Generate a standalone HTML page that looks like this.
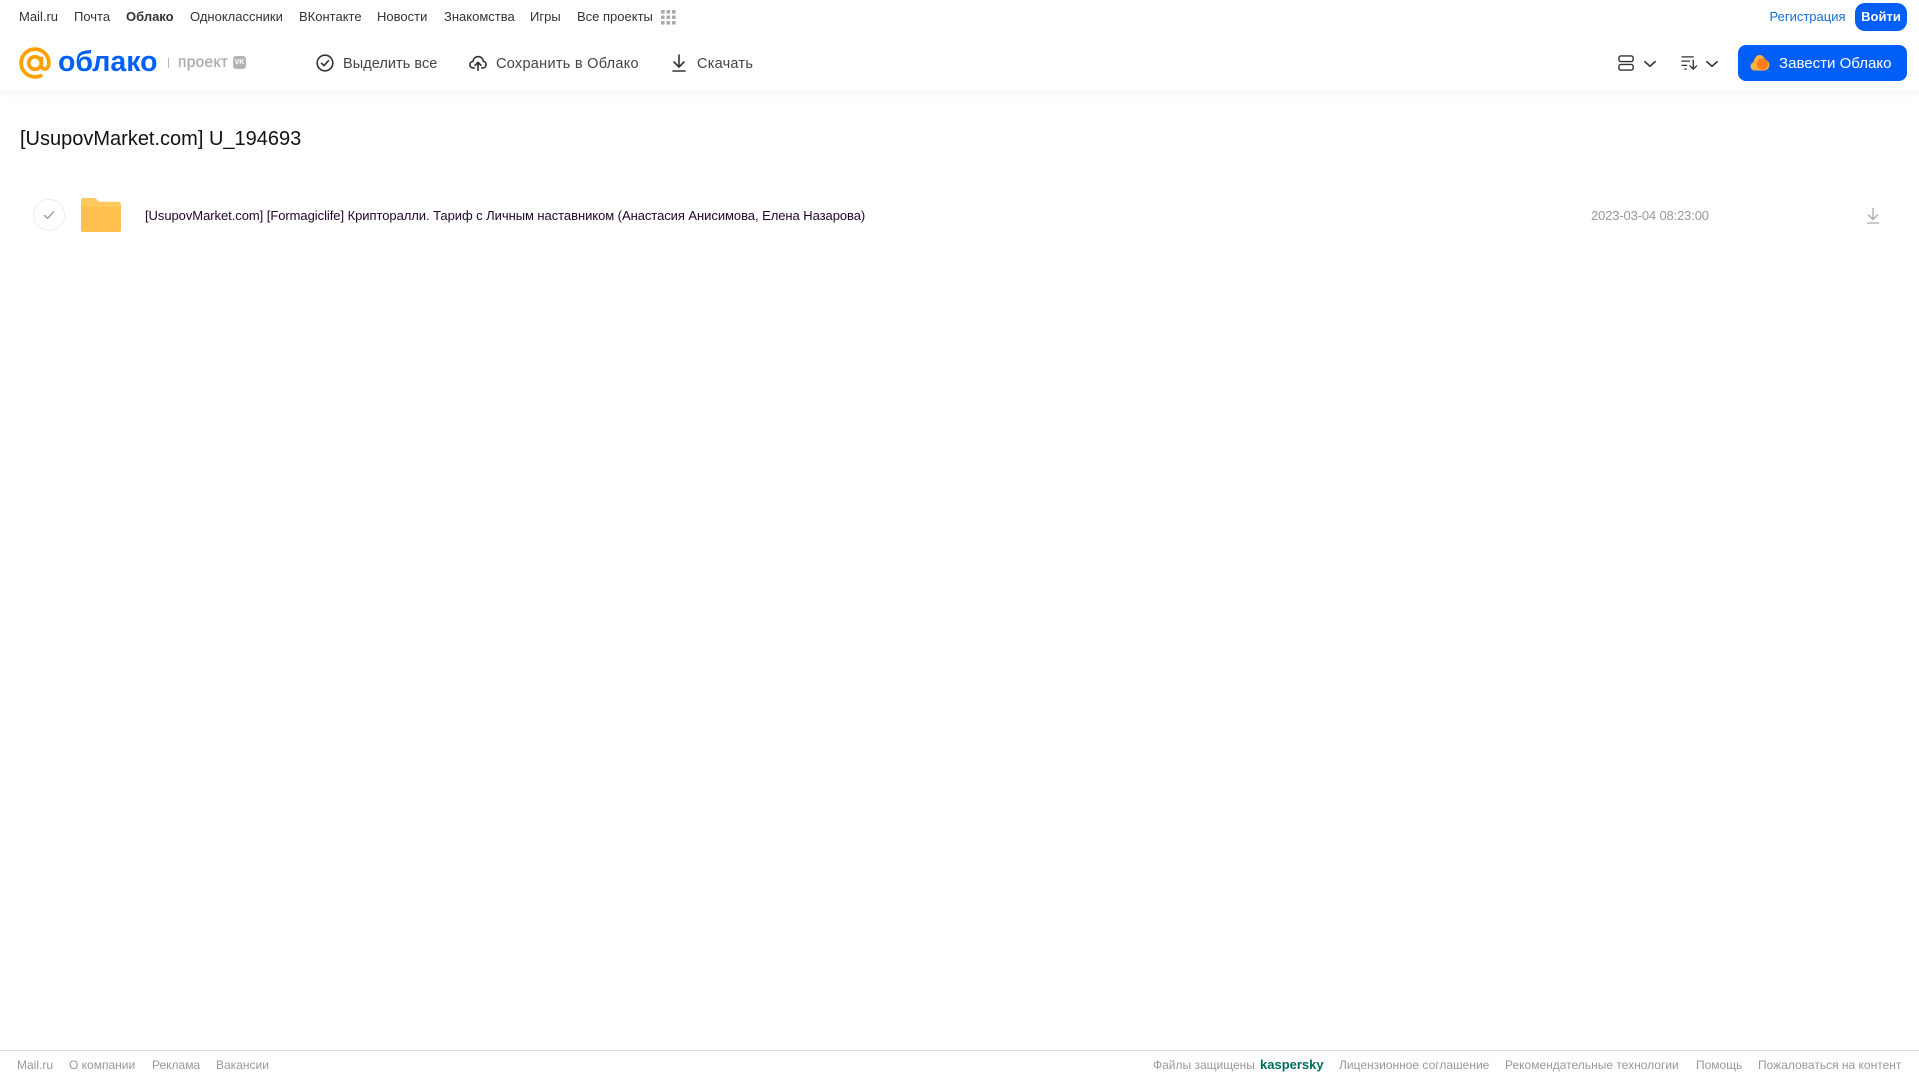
<!DOCTYPE html>
<html lang="ru"><head><meta charset="utf-8"><title>Облако</title>
<style>
html,body{margin:0;padding:0;width:1919px;height:1079px;overflow:hidden;background:#fff;font-family:"Liberation Sans",Arial,sans-serif}
.t{position:absolute;white-space:nowrap;line-height:18px;height:18px}
.n{font-size:13px;color:#333;top:8px}
.b{font-size:14.5px;color:#444;top:55px}
.f{font-size:12px;color:#999;top:1056px}
svg{position:absolute;overflow:visible}
#hd{position:absolute;left:0;top:0;width:1919px;height:91px;background:#fff;box-shadow:0 2px 8px rgba(0,0,0,.06)}
</style></head><body>
<div id="hd"></div>
<span class="t n" style="left:19px">Mail.ru</span>
<span class="t n" style="left:74px">Почта</span>
<span class="t n" style="left:126px;font-weight:bold">Облако</span>
<span class="t n" style="left:190px">Одноклассники</span>
<span class="t n" style="left:299px">ВКонтакте</span>
<span class="t n" style="left:377px">Новости</span>
<span class="t n" style="left:444px">Знакомства</span>
<span class="t n" style="left:530px">Игры</span>
<span class="t n" style="left:577px">Все проекты</span>
<svg style="left:661px;top:10px" width="15" height="15" fill="#a8a8a8"><rect x="0" y="0" width="3.6" height="3.6" rx=".8"/><rect x="5.5" y="0" width="3.6" height="3.6" rx=".8"/><rect x="11" y="0" width="3.6" height="3.6" rx=".8"/><rect x="0" y="5.5" width="3.6" height="3.6" rx=".8"/><rect x="5.5" y="5.5" width="3.6" height="3.6" rx=".8"/><rect x="11" y="5.5" width="3.6" height="3.6" rx=".8"/><rect x="0" y="11" width="3.6" height="3.6" rx=".8"/><rect x="5.5" y="11" width="3.6" height="3.6" rx=".8"/><rect x="11" y="11" width="3.6" height="3.6" rx=".8"/></svg>

<span class="t n" style="left:1769.500px;color:#1a6fd4">Регистрация</span>
<div style="position:absolute;left:1855px;top:3px;width:52px;height:28px;border-radius:10px;background:#005ff9;color:#fff;font-size:13px;font-weight:bold;line-height:28px;text-align:center">Войти</div>

<svg style="left:19px;top:47px" width="32" height="32" viewBox="0 0 33 33" fill="none" stroke="#ffa000" stroke-width="3.800"><circle cx="16.5" cy="16.5" r="6.5"/><path d="M23 10v8.500c0 2.600 1.500 4.200 3.600 4.200 2.600 0 4.200-2.800 4.200-6.200C30.800 8.600 24.400 2.200 16.500 2.200S2.200 8.600 2.200 16.500 8.600 30.800 16.500 30.800c2.700 0 5.200-.7 7.300-2"/></svg>
<span class="t" style="left:58px;top:44px;height:36px;line-height:36px;font-size:28.500px;font-weight:bold;color:#005ff9">облако</span>
<div style="position:absolute;left:168px;top:58px;width:1px;height:10px;background:#bbb"></div>
<span class="t" style="left:178px;top:54px;font-size:15.500px;color:#aaa;letter-spacing:.3px;-webkit-text-stroke:.3px #aaa">проект</span>
<div style="position:absolute;left:233px;top:56px;width:13px;height:13px;border-radius:3px;background:#b4b4b4;color:#fff;font-size:7px;font-weight:bold;line-height:13px;text-align:center">VK</div>

<svg style="left:315px;top:54px" width="20" height="18" viewBox="0 0 20 18" fill="none" stroke="#333" stroke-width="1.600"><circle cx="10" cy="9" r="7.800"/><path d="M6.500 9.200l2.500 2.500 4.500-5" stroke-linecap="round" stroke-linejoin="round"/></svg>
<span class="t b" style="left:343px;letter-spacing:.05px">Выделить все</span>
<svg style="left:469px;top:54px" width="18" height="18" viewBox="0 0 20 18" fill="none" stroke="#333" stroke-width="1.800" stroke-linecap="round" stroke-linejoin="round"><path d="M5.800 14.500H5c-2.500 0-4-1.600-4-3.700 0-2 1.500-3.500 3.400-3.600C5 4 7.300 1.800 10.200 1.800c3 0 5.300 2.200 5.700 5.300 1.800.2 3.100 1.700 3.100 3.700 0 2.100-1.500 3.700-3.700 3.700h-1.100"/><path d="M10 17V8.500M6.800 11.500L10 8.300l3.200 3.200"/></svg>
<span class="t b" style="left:496px;letter-spacing:.28px">Сохранить в Облако</span>
<svg style="left:671px;top:54px" width="16" height="18" viewBox="0 0 16 18" fill="none" stroke="#333" stroke-width="1.600" stroke-linecap="round" stroke-linejoin="round"><path d="M8 1v11.500M3 8l5 5 5-5M2 17h12"/></svg>
<span class="t b" style="left:697px;letter-spacing:.25px">Скачать</span>

<svg style="left:1618px;top:54px" width="17" height="18" viewBox="0 0 18 18" fill="none" stroke="#333" stroke-width="1.500"><rect x="1" y="1.500" width="15" height="6" rx="2"/><rect x="1" y="10.500" width="15" height="6" rx="2"/></svg>
<svg style="left:1644px;top:60px" width="12" height="8" viewBox="0 0 13 8" fill="none" stroke="#333" stroke-width="1.800" stroke-linecap="round" stroke-linejoin="round"><path d="M1 1.500l5.500 5 5.500-5"/></svg>
<svg style="left:1681px;top:55px" width="17" height="16" viewBox="0 0 18 16" fill="none" stroke="#333" stroke-width="1.400" stroke-linecap="round" stroke-linejoin="round"><path d="M1 1.500h12M1 6h8M1 10.500h5M4 14.500h1.500M13 5v9.500M9.500 11l3.500 3.500 3.500-3.500"/></svg>
<svg style="left:1706px;top:60px" width="12" height="8" viewBox="0 0 13 8" fill="none" stroke="#333" stroke-width="1.800" stroke-linecap="round" stroke-linejoin="round"><path d="M1 1.500l5.500 5 5.500-5"/></svg>

<div style="position:absolute;left:1738px;top:45px;width:169px;height:36px;border-radius:8px;background:#005ff9"></div>
<svg style="left:1750px;top:54px" width="20" height="17" viewBox="0 0 20 17"><path d="M5 16.500C2 16.500.5 14.500.5 12.300c0-2 1.200-3.500 3-4C4.200 4.500 6.500 1 9.500 1c2.800 0 4.800 2 5.500 4.700 2.500.4 4.300 2.500 4.300 5.300 0 3-2.300 5.500-5.300 5.500z" fill="#ffb13d"/><circle cx="12.500" cy="10" r="5.500" fill="#ff7a1a"/></svg>
<span class="t" style="left:1779px;top:55px;font-size:15px;color:#fff;letter-spacing:.02px">Завести Облако</span>

<span class="t" style="left:20px;top:126px;height:26px;line-height:26px;font-size:20px;color:#111">[UsupovMarket.com] U_194693</span>

<div style="position:absolute;left:33px;top:199px;width:30px;height:30px;border:1px solid #eee;border-radius:50%"></div>
<svg style="left:43px;top:210px" width="12" height="10" viewBox="0 0 12 10" fill="none" stroke="#999" stroke-width="1.400" stroke-linecap="round" stroke-linejoin="round"><path d="M1.500 5.500l3 2.800 6-6.500"/></svg>
<svg style="left:81px;top:198px" width="40" height="34" viewBox="0 0 40 34"><path d="M2.500 0h10c2 0 3 1 4 2.500.6.800 1.200 1.200 2.500 1.200h18.500c1.400 0 2.500 1.100 2.500 2.500V32c0 1.100-.9 2-2 2H2c-1.100 0-2-.9-2-2V2.500C0 1.100 1.100 0 2.500 0z" fill="#ffca62"/><path d="M0 8.500h40V32c0 1.100-.9 2-2 2H2c-1.100 0-2-.9-2-2z" fill="#ffc04f"/></svg>
<span class="t" style="left:145px;top:207px;font-size:13px;color:#20062e;letter-spacing:-.055px">[UsupovMarket.com] [Formagiclife] Крипторалли. Тариф с Личным наставником (Анастасия Анисимова, Елена Назарова)</span>
<span class="t" style="left:1591px;top:207px;font-size:13px;color:#999;letter-spacing:-.15px">2023-03-04 08:23:00</span>
<svg style="left:1866px;top:207px" width="14" height="17" viewBox="0 0 14 17" fill="none" stroke="#aaa" stroke-width="1.300"><path d="M7 1v11M2 7.500L7 12.500l5-5M1 16h12"/></svg>

<div style="position:absolute;left:0;top:1050px;width:1919px;height:1px;background:#dcdcdc"></div>
<span class="t f" style="left:17px">Mail.ru</span>
<span class="t f" style="left:69px">О компании</span>
<span class="t f" style="left:152px">Реклама</span>
<span class="t f" style="left:216px">Вакансии</span>
<span class="t f" style="left:1153px">Файлы защищены</span>
<span class="t f" style="left:1260px;color:#006d5c;font-weight:bold;font-size:13px">kaspersky</span>
<span class="t f" style="left:1339px">Лицензионное соглашение</span>
<span class="t f" style="left:1505px">Рекомендательные технологии</span>
<span class="t f" style="left:1696px">Помощь</span>
<span class="t f" style="left:1758px">Пожаловаться на контент</span>
</body></html>
